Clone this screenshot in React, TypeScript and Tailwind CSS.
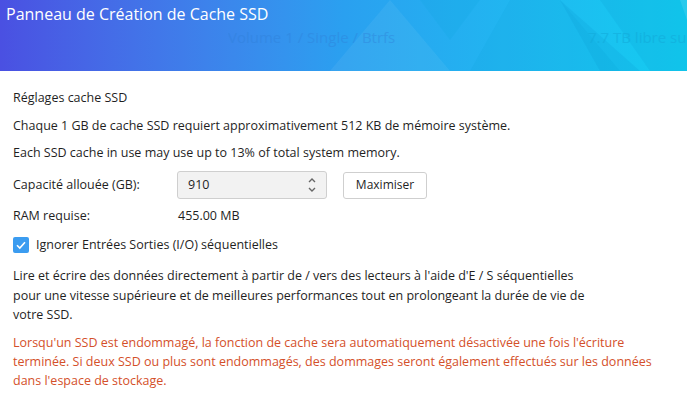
import React from "react";

export default function App() {
  return (
    <div
      className="w-[687px] h-[407px] bg-white overflow-hidden text-[#1f1f1f]"
      style={{ fontFamily: '"Open Sans", "Noto Sans", sans-serif' }}
    >
      <div className="relative h-[71px] bg-gradient-to-r from-[#4a50e2] via-[#2aa0f0] to-[#12cdf0] overflow-hidden">
        <svg className="absolute inset-0" width="687" height="71" viewBox="0 0 687 71">
          <polygon points="390,0 450,71 330,71" fill="#ffffff" opacity="0.06" />
          <polygon points="420,0 480,0 450,40" fill="#0aa0d8" opacity="0.15" />
          <polygon points="510,0 560,0 620,71 470,71" fill="#0aa0d8" opacity="0.12" />
          <polygon points="560,0 640,71 600,71" fill="#0a90c8" opacity="0.15" />
          <polygon points="600,0 687,0 687,71 650,71" fill="#0a9ad0" opacity="0.18" />
          <polygon points="680,0 687,0 687,20" fill="#ffffff" opacity="0.1" />
        </svg>
        <div className="relative pl-[6px] pt-[3px] text-[16px] text-white leading-[22px]">
          Panneau de Création de Cache SSD
        </div>
        <div className="absolute left-[228px] top-[26px] whitespace-nowrap text-[15px] text-[#2f7fd8] opacity-40">
          Volume 1 / Single / Btrfs
        </div>
        <div className="absolute left-[588px] top-[26px] whitespace-nowrap text-[15px] text-[#12a8d8] opacity-50">
          7.7 TB libre sur 9
        </div>
      </div>

      <div className="px-[13px] text-[12.5px]">
        <div className="mt-[18px] leading-[18px]">Réglages cache SSD</div>
        <div className="mt-[10px] leading-[18px]">
          Chaque 1 GB de cache SSD requiert approximativement 512 KB de mémoire système.
        </div>
        <div className="mt-[9px] leading-[18px]">
          Each SSD cache in use may use up to 13% of total system memory.
        </div>

        <div className="mt-[9px] flex items-center h-[28px]">
          <div className="w-[164px]">Capacité allouée (GB):</div>
          <div className="w-[150px] h-[28px] rounded-[3px] border border-[#cfcfcf] bg-[#f2f2f2] flex items-center justify-between pl-[10px] pr-[9px]">
            <span>910</span>
            <svg width="10" height="18" viewBox="0 0 10 18" fill="none" stroke="#666" strokeWidth="1.4">
              <path d="M2 6 L5 3 L8 6" />
              <path d="M2 12 L5 15 L8 12" />
            </svg>
          </div>
          <button className="ml-[16px] w-[84px] h-[27px] rounded-[3px] border border-[#cfcfcf] bg-white text-[12px]">
            Maximiser
          </button>
        </div>

        <div className="mt-[8px] flex items-center leading-[18px]">
          <div className="w-[165px]">RAM requise:</div>
          <div>455.00 MB</div>
        </div>

        <div className="mt-[11px] flex items-center leading-[18px]">
          <div className="w-[16px] h-[16px] rounded-[2px] bg-[#3b9cf0] flex items-center justify-center">
            <svg width="12" height="12" viewBox="0 0 12 12" fill="none" stroke="white" strokeWidth="1.6">
              <path d="M2 6.2 L4.8 9 L10 3.2" />
            </svg>
          </div>
          <span className="ml-[7px]">Ignorer Entrées Sorties (I/O) séquentielles</span>
        </div>

        <div className="mt-[12px] leading-[19.5px]">
          Lire et écrire des données directement à partir de / vers des lecteurs à l'aide d'E / S séquentielles
          <br />
          pour une vitesse supérieure et de meilleures performances tout en prolongeant la durée de vie de
          <br />
          votre SSD.
        </div>

        <div className="mt-[8px] leading-[19px] text-[#d4502a]">
          Lorsqu'un SSD est endommagé, la fonction de cache sera automatiquement désactivée une fois l'écriture
          <br />
          terminée. Si deux SSD ou plus sont endommagés, des dommages seront également effectués sur les données
          <br />
          dans l'espace de stockage.
        </div>
      </div>
    </div>
  );
}
